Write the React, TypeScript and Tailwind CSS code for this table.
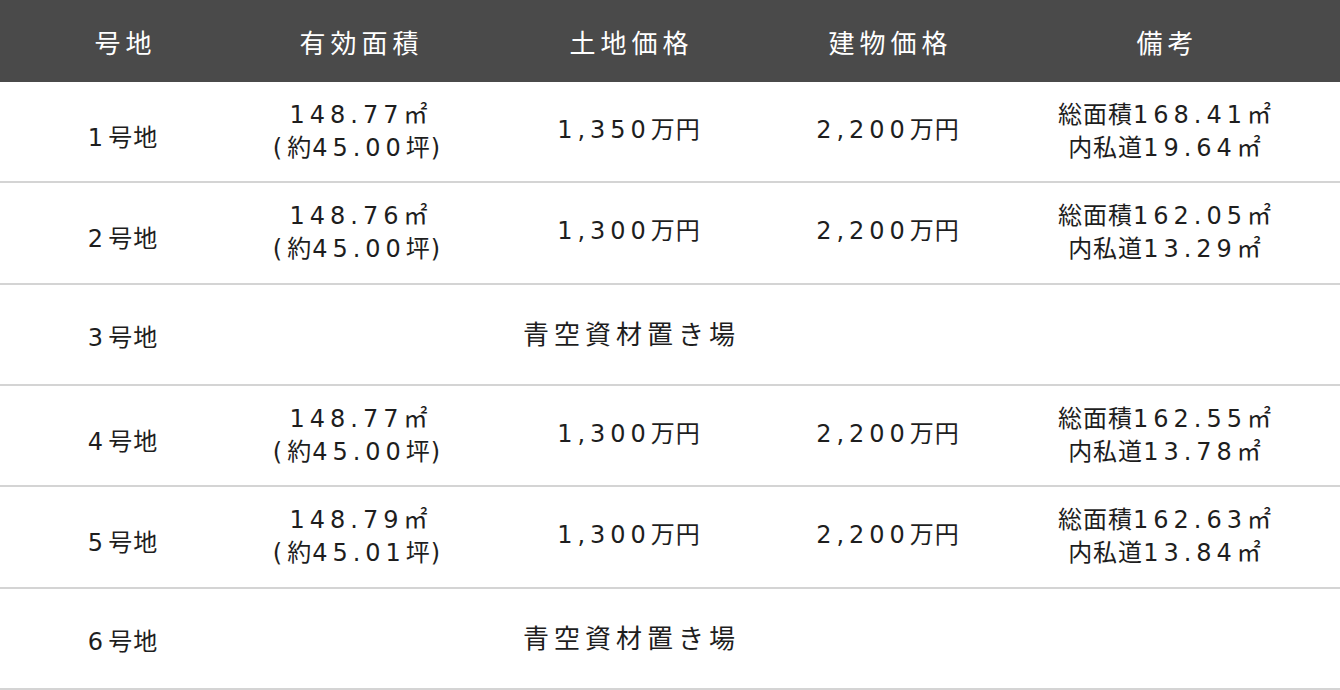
import React from 'react'

type Row = {
  no: string
  area?: [string, string]
  land?: string
  building?: string
  note?: [string, string]
  text?: string
}

const rows: Row[] = [
  { no: '1号地', area: ['148.77㎡', '(約45.00坪)'], land: '1,350万円', building: '2,200万円', note: ['総面積168.41㎡', '内私道19.64㎡'] },
  { no: '2号地', area: ['148.76㎡', '(約45.00坪)'], land: '1,300万円', building: '2,200万円', note: ['総面積162.05㎡', '内私道13.29㎡'] },
  { no: '3号地', text: '青空資材置き場' },
  { no: '4号地', area: ['148.77㎡', '(約45.00坪)'], land: '1,300万円', building: '2,200万円', note: ['総面積162.55㎡', '内私道13.78㎡'] },
  { no: '5号地', area: ['148.79㎡', '(約45.01坪)'], land: '1,300万円', building: '2,200万円', note: ['総面積162.63㎡', '内私道13.84㎡'] },
  { no: '6号地', text: '青空資材置き場' },
]

const headers = ['号地', '有効面積', '土地価格', '建物価格', '備考']

const cols = 'grid grid-cols-[246px_226px_314px_204px_350px]'

// Latin runs get the wide Verdana-like face, the rest stays in the CJK face
function Mixed({ value }: { value: string }) {
  const parts = value.match(/[\x20-\x7e]+|[^\x20-\x7e]+/g) ?? []
  return (
    <span className="whitespace-nowrap">
      {parts.map((p, i) =>
        /^[\x20-\x7e]/.test(p) ? (
          <span key={i} className="tracking-[5px] [font-family:'DejaVu_Sans',sans-serif]">
            {p}
          </span>
        ) : (
          <span key={i} className="tracking-[1px]">
            {p}
          </span>
        )
      )}
    </span>
  )
}

function Lines({ lines }: { lines: [string, string] }) {
  return (
    <div className="flex flex-col items-center mb-[6px]">
      <div className="h-[33px] leading-[33px]">
        <Mixed value={lines[0]} />
      </div>
      <div className="h-[33px] leading-[33px]">
        <Mixed value={lines[1]} />
      </div>
    </div>
  )
}

export default function App() {
  return (
    <div className="w-[1340px] h-[690px] bg-white overflow-hidden text-[24px] text-[#1e1e1e] [font-family:'Noto_Sans_CJK_JP',sans-serif]">
      <div className={`${cols} h-[82px] bg-[#4a4a4a] text-white text-[26px]`}>
        {headers.map((h) => (
          <div key={h} className="flex items-center justify-center tracking-[5px] pl-[5px]">
            {h}
          </div>
        ))}
      </div>
      {rows.map((r) => (
        <div key={r.no} className={`${cols} h-[101.33px] border-b-2 border-[#d4d4d4]`}>
          <div className={`flex items-center justify-center ${r.text ? 'pt-[6px]' : 'pt-[10px]'}`}>
            <Mixed value={r.no} />
          </div>
          <div className="flex items-center justify-center">{r.area && <Lines lines={r.area} />}</div>
          <div className={`flex items-center justify-center ${r.text ? 'pb-[3px]' : 'pb-[5px]'}`}>
            {r.text ? (
              <span className="text-[26px] tracking-[5px] pl-[5px]">{r.text}</span>
            ) : (
              r.land && <Mixed value={r.land} />
            )}
          </div>
          <div className="flex items-center justify-center pb-[5px]">{r.building && <Mixed value={r.building} />}</div>
          <div className="flex items-center justify-center">{r.note && <Lines lines={r.note} />}</div>
        </div>
      ))}
    </div>
  )
}
